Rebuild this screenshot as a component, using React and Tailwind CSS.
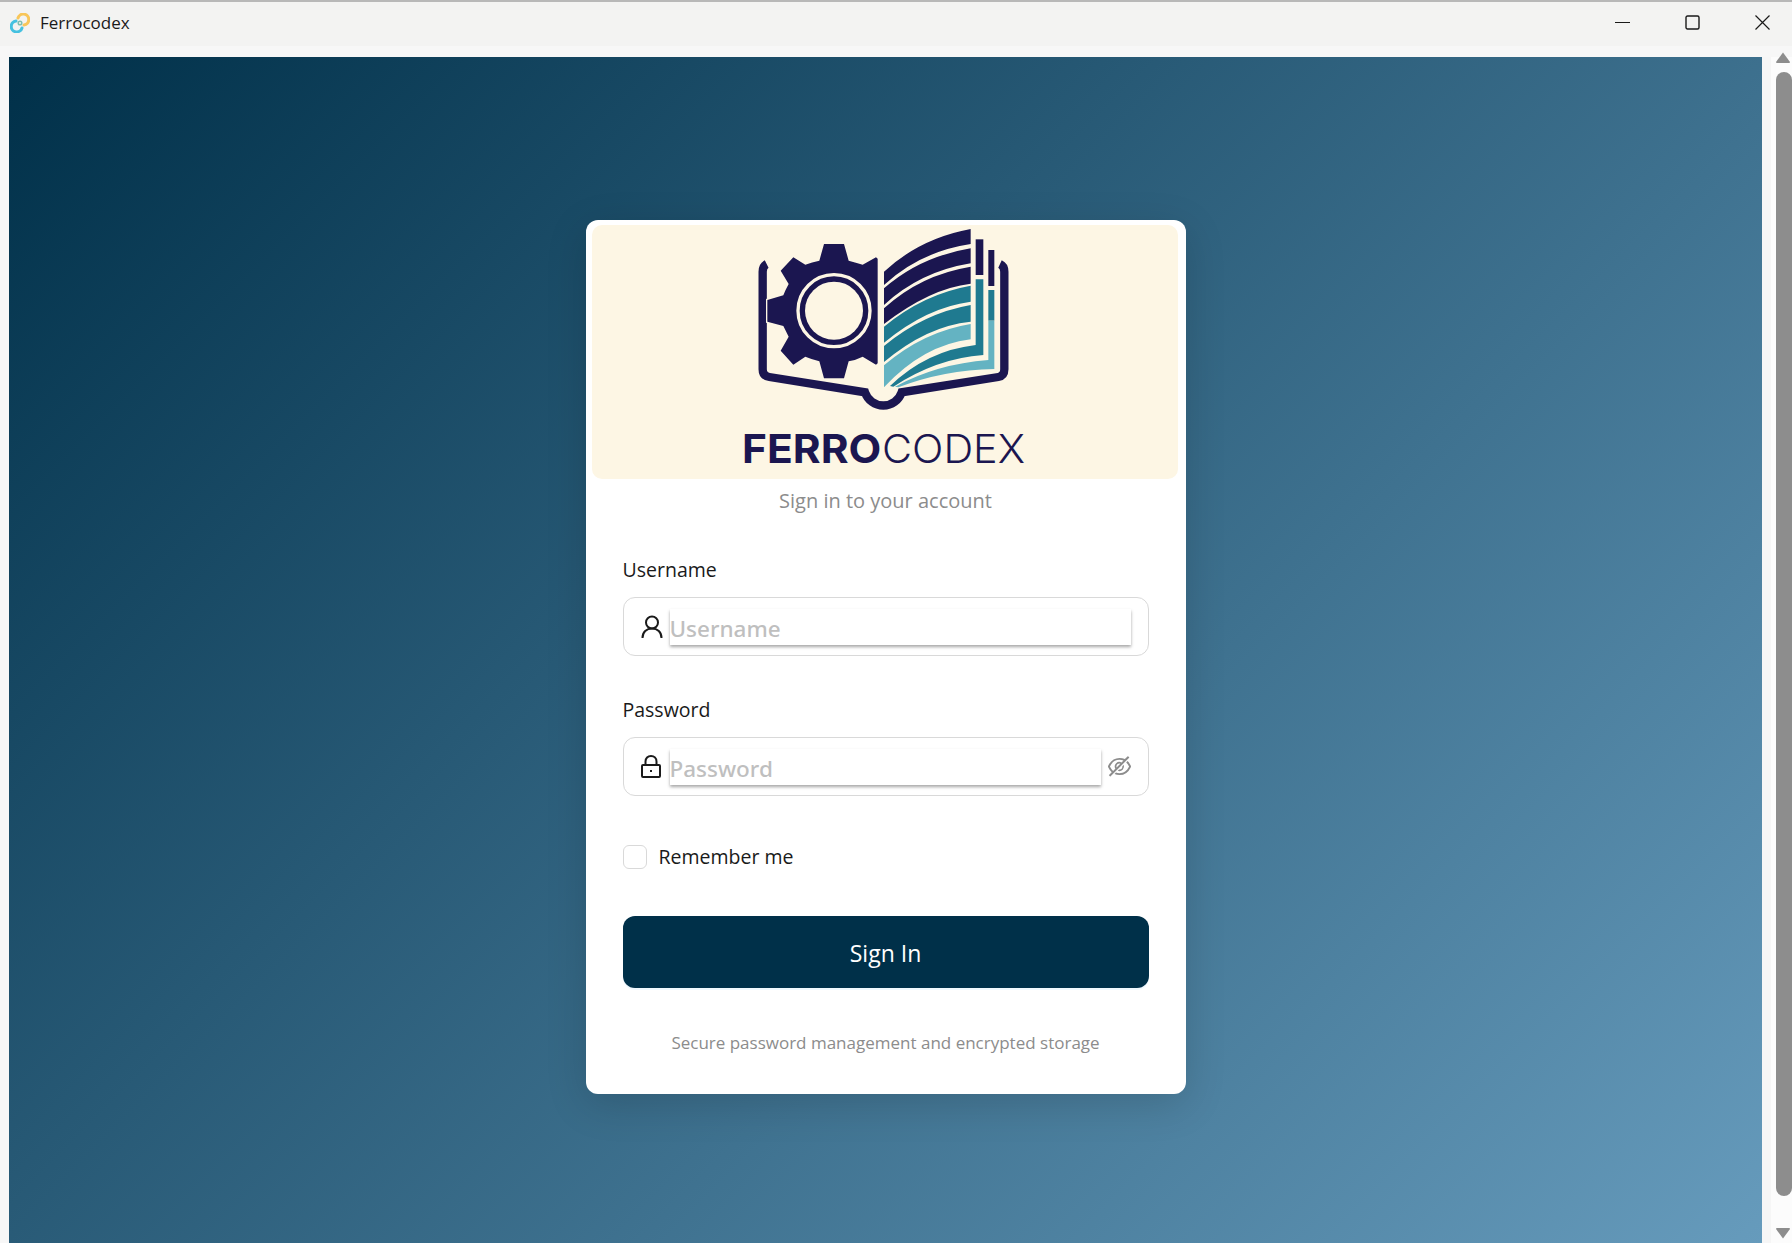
import React from "react";
import { AiOutlineEyeInvisible } from "react-icons/ai";

const font = { fontFamily: '"Open Sans", "Noto Sans", sans-serif' };

const Logo = () => (
  <svg viewBox="-414 15 1758 762" className="w-full h-full block">
    {/* book cover */}
    <path
      d="M110 132 Q98 138 98 155 L98 448 Q98 468 118 471 L405 517 A58 58 0 0 0 515 517 L805 471 Q823 468 823 448 L823 155 Q823 138 810 132"
      fill="none"
      stroke="#1b1650"
      strokeWidth="25"
    />
    {/* gear */}
    <path
      d="M282 72 L342 72 L356 122 Q378 128 398 134 L438 112 L443 116 L443 430 L438 434 L398 410 Q378 420 356 424 L342 475 L282 475 L268 424 Q246 418 226 410 L190 434 L152 392 L176 350 Q168 334 160 318 L112 305 L112 240 L160 226 Q166 210 176 192 L152 152 L190 112 L226 134 Q246 126 268 122 Z"
      fill="#1b1650"
      stroke="#fdf6e4"
      strokeWidth="8"
      paintOrder="stroke"
    />
    <circle cx="312" cy="272" r="108" fill="#1b1650" stroke="#fdf6e4" strokeWidth="10" />
    <circle cx="312" cy="272" r="87" fill="#fdf6e4" />
    {/* pages */}
    <path d="M462 155 Q570 55 722 27 L722 72 Q570 95 462 195 Z" fill="#1b1650" />
    <path d="M462 205 Q570 110 722 85 L722 130 Q570 155 462 255 Z" fill="#1b1650" />
    <path d="M462 265 Q570 165 722 140 L722 191 Q600 205 462 312 Z" fill="#1b1650" />
    <path d="M462 320 Q580 222 722 197 L722 245 Q590 262 462 368 Z" fill="#1f7a90" />
    <path d="M462 378 Q580 280 722 255 L722 305 Q590 318 462 426 Z" fill="#1f7a90" />
    <path d="M462 436 Q580 335 722 312 L722 358 Q580 375 462 502 Z" fill="#64b3c2" />
    <rect x="737" y="58" width="23" height="107" fill="#1b1650" />
    <path d="M480 498 Q590 392 737 375 L737 178 L760 178 L760 405 Q620 415 490 500 Z" fill="#1f7a90" />
    <rect x="775" y="90" width="18" height="108" fill="#1b1650" />
    <rect x="775" y="210" width="18" height="92" fill="#1f7a90" />
    <path d="M495 500 Q620 432 775 420 L775 302 L793 302 L793 447 Q640 450 505 502 Z" fill="#64b3c2" />
    {/* wordmark */}
    <text x="36" y="729" fontSize="120" fontWeight="700" fill="#1b1650" textLength="418" lengthAdjust="spacingAndGlyphs" style={{ fontFamily: "Inter, sans-serif" }}>
      FERRO
    </text>
    <text x="456" y="729" fontSize="120" fontWeight="300" fill="#1b1650" textLength="429" lengthAdjust="spacingAndGlyphs" style={{ fontFamily: "Inter, sans-serif" }}>
      CODEX
    </text>
  </svg>
);

const AppIcon = () => (
  <svg width="20" height="20" viewBox="0 0 20 20" fill="none" strokeWidth="3" strokeLinecap="round">
    <path d="M8 5 A5.5 5.5 0 1 1 14 12" stroke="#f8c65a" />
    <path d="M12 15 A5.5 5.5 0 1 1 6 8" stroke="#45c1e0" />
    <circle cx="10" cy="10" r="1.8" stroke="#7fbfb0" strokeWidth="1.5" />
  </svg>
);

const UserIcon = () => (
  <svg width="22" height="24" viewBox="0 0 22 24" fill="none" stroke="#1a1a1a" strokeWidth="2">
    <circle cx="11" cy="7.5" r="6" />
    <path d="M1.5 23 C1.5 17 5.5 13.5 11 13.5 C16.5 13.5 20.5 17 20.5 23" />
  </svg>
);

const LockIcon = () => (
  <svg width="20" height="23" viewBox="0 0 20 23" fill="none" stroke="#1a1a1a" strokeWidth="2">
    <rect x="1" y="10" width="18" height="12" rx="1" />
    <path d="M4.5 10 V6.5 C4.5 3.2 6.8 1 10 1 C13.2 1 15.5 3.2 15.5 6.5 V10" />
    <path d="M10 15 V17" />
  </svg>
);

const Input = ({ icon, placeholder, type = "text", suffix }) => (
  <div className="h-[59px] rounded-[12px] border border-[#d9d9d9] bg-white flex items-center pl-[17px] pr-[17px]">
    <div className="w-[29px] shrink-0 flex justify-start">{icon}</div>
    <input
      type={type}
      placeholder={placeholder}
      style={{ fontFamily: '"Noto Sans", sans-serif' }}
      className="flex-1 min-w-0 h-[36px] pt-[3px] bg-white outline-none text-[22.5px] font-medium placeholder:text-[#bfbfbf] shadow-[0_2px_3px_rgba(0,0,0,0.35)]"
    />
    {suffix}
  </div>
);

const App = () => {
  return (
    <div className="w-[1792px] h-[1243px] overflow-hidden bg-[#f7f7f7] flex flex-col" style={font}>
      {/* title bar */}
      <div className="h-[46px] shrink-0 border-t-2 border-[#b8b8b8] bg-[#f3f3f2] flex items-center justify-between pl-[10px] pr-[22px] pb-[3px]">
        <div className="flex items-center gap-[10px]">
          <AppIcon />
          <span className="text-[17px] text-[#1a1a1a]">Ferrocodex</span>
        </div>
        <div className="flex items-center gap-[55px]">
          <svg width="15" height="15" viewBox="0 0 15 15" stroke="#1a1a1a" fill="none">
            <path d="M0 7.5 H15" />
          </svg>
          <svg width="15" height="15" viewBox="0 0 15 15" stroke="#1a1a1a" strokeWidth="1.4" fill="none">
            <rect x="1" y="1" width="13" height="13" rx="1.5" />
          </svg>
          <svg width="15" height="15" viewBox="0 0 15 15" stroke="#1a1a1a" strokeWidth="1.2" fill="none">
            <path d="M0.5 0.5 L14.5 14.5 M14.5 0.5 L0.5 14.5" />
          </svg>
        </div>
      </div>

      <div className="flex-1 min-h-0 flex pl-[9px] pt-[11px]">
        {/* page */}
        <div className="flex-1 min-w-0 bg-[linear-gradient(135deg,#003049_0%,#669bbc_100%)] flex justify-center items-start pt-[163px]">
          <div className="w-[600px] h-[874px] bg-white rounded-[12px] shadow-[0_10px_40px_rgba(0,0,0,0.15)] flex flex-col px-[37px] pt-[5px]">
            <div className="h-[254px] ml-[-31px] mr-[-29px] rounded-[10px] bg-[#fdf6e4] shrink-0 overflow-hidden">
              <Logo />
            </div>
            <div className="text-center text-[20px] leading-[44px] text-[#8c8c8c]">Sign in to your account</div>
            <label className="mt-[33px] text-[19.5px] leading-[28px] text-[#1a1a1a]">Username</label>
            <div className="mt-[13px]">
              <Input icon={<UserIcon />} placeholder="Username" />
            </div>
            <label className="mt-[40px] text-[19.5px] leading-[28px] text-[#1a1a1a]">Password</label>
            <div className="mt-[13px]">
              <Input
                icon={<LockIcon />}
                placeholder="Password"
                type="password"
                suffix={<AiOutlineEyeInvisible className="ml-[5px] mr-[-2px] w-[27px] h-[27px] text-[#8c8c8c]" />}
              />
            </div>
            <div className="mt-[47px] flex items-center gap-[12px]">
              <span className="w-[24px] h-[24px] rounded-[6px] border border-[#d9d9d9] bg-white" />
              <span className="text-[19.5px] leading-[28px] text-[#1a1a1a]">Remember me</span>
            </div>
            <button className="mt-[45px] h-[72px] pt-[2px] rounded-[12px] bg-[#003049] text-white text-[23px] shadow-[0_2px_0_rgba(5,145,255,0.06)]">
              Sign In
            </button>
            <div className="mt-[43px] text-center text-[17px] leading-[24px] text-[#8c8c8c]">
              Secure password management and encrypted storage
            </div>
          </div>
        </div>
        {/* scrollbar */}
        <div className="w-[30px] shrink-0 flex">
          <div className="w-[12px] bg-[#f6f6f6]" />
          <div className="flex-1 bg-[#fcfcfc] flex flex-col items-start pl-[5px]">
            <svg width="16" height="11" viewBox="0 0 16 11" className="mt-[-5px] ml-[-1px] shrink-0" fill="#8d8d8d">
              <path d="M8 0.5 L15 10 Q15 11 14 11 H2 Q1 11 1 10 Z" />
            </svg>
            <div className="w-[16px] h-[1124px] mt-[9px] rounded-t-full rounded-b-full bg-[#8d8d8d] shrink-0" />
            <svg width="16" height="11" viewBox="0 0 16 11" className="mt-[32px] ml-[-1px] shrink-0" fill="#8d8d8d">
              <path d="M8 10.5 L15 1 Q15 0 14 0 H2 Q1 0 1 1 Z" />
            </svg>
          </div>
        </div>
      </div>
    </div>
  );
};

export default App;
